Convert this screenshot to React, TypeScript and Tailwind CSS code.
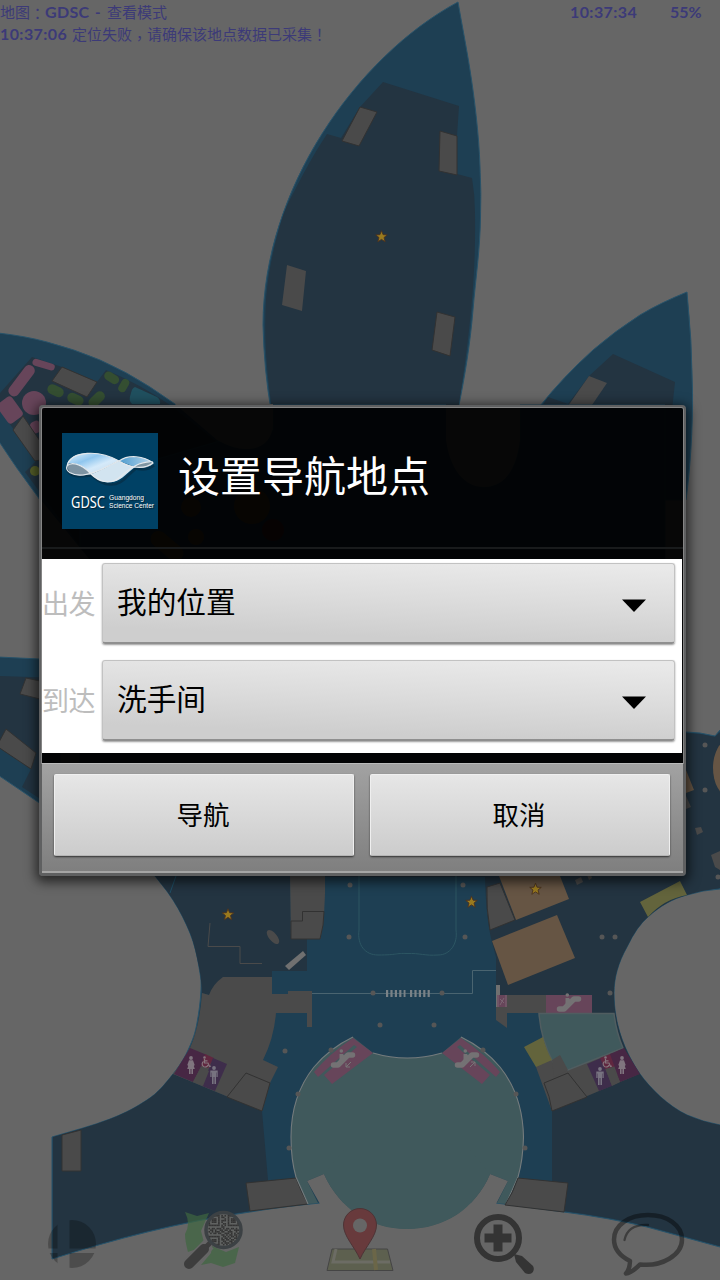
import type { ReactNode } from "react";

const BLUE = "#1e3f53";
const DARK = "#233441";
const GRAY = "#4a4a4a";
const EDGE = "#323232";
const PALE = "#666666";
const TEAL = "#40595c";
const PINK = "#67455a";

const CJK = "font-['Lato','Noto_Sans_CJK_SC',sans-serif]";

function Star({ x, y }: { x: number; y: number }) {
  return (
    <path
      transform={`translate(${x} ${y}) scale(1.15)`}
      d="M0-5 1.4-1.6 5-1.4 2.2.9 3.2 4.6 0 2.5-3.2 4.6-2.2.9-5-1.4-1.4-1.6Z"
      fill="#9a7a1e"
      stroke="#4a3220"
      strokeWidth=".8"
    />
  );
}

function Man({ x, y }: { x: number; y: number }) {
  return (
    <g transform={`translate(${x} ${y})`} fill="#777380">
      <circle cx="0" cy="-7" r="1.9" />
      <path d="M-3.7-4.5H3.7V2H2.4V-2.500H2V9H.4V2H-.4V9H-2V-2.500H-2.400V2H-3.700Z" />
    </g>
  );
}

function Woman({ x, y }: { x: number; y: number }) {
  return (
    <g transform={`translate(${x} ${y})`} fill="#80757f">
      <circle cx="0" cy="-7" r="1.9" />
      <path d="M-2-4.700H2L3.700 0 2.800 1 3.800 4H2V9H.4V4H-.4V9H-2V4H-3.800L-2.800 1-3.700 0Z" />
    </g>
  );
}

function Wheelchair({ x, y }: { x: number; y: number }) {
  return (
    <g transform={`translate(${x} ${y})`} fill="none" stroke="#85757d" strokeWidth="1.200">
      <circle cx="-1.500" cy="-4.500" r=".7" />
      <path d="M-1.500-3V1H2L3.500 4.500 5 4M-1.500-1.200H1.500M-2.500-.5A3 3 0 1 0 2 3" />
    </g>
  );
}

function Escalator({ x, y }: { x: number; y: number }) {
  return (
    <g transform={`translate(${x} ${y})`}>
      <path
        d="M-9.500 6H-5L5-4H9.500"
        fill="none"
        stroke="#747274"
        strokeWidth="5.500"
        strokeLinecap="round"
        strokeLinejoin="round"
      />
      <path d="M-3.500 3V-5H0L2-2V2Z" fill="#747274" />
      <circle cx="-1.700" cy="-8" r="1.800" fill="#747274" />
    </g>
  );
}

const dots: [number, number][] = [
  [350, 885], [349, 937], [463, 885], [465, 937], [373, 993], [442, 993], [380, 1025], [434, 1025],
  [285, 1051], [331, 1050], [483, 1050], [298, 1094], [516, 1094], [289, 1148], [525, 1148],
  [602, 937], [615, 937], [610, 993], [705, 745], [705, 790], [718, 877],
];

function VenueMap() {
  return (
    <svg className="absolute inset-0" width="720" height="1280" viewBox="0 0 720 1280">
      <rect width="720" height="1280" fill={PALE} />

      {/* north petal */}
      <path
        d="M458 2C356 57 263 190 263 325Q264 370 271 410L290 480H440L459 405C465 375 470 345 473 310S480 250 480.500 217S481 200 480 167S474 95 470 70S462 25 458 2Z"
        fill={BLUE} stroke="#28536a" strokeWidth="1"
      />
      <path
        d="M383 82 459 106 457 136V174L472 178Q475 195 475 213C476 270 471 330 458 410H272C266 365 264 335 266 300C268 275 272 255 278 233S287 205 295 190S310 160 327 134L341 138 360 107Z"
        fill={DARK}
      />
      <g fill={GRAY} stroke={EDGE} strokeWidth="1">
        <path d="M360 107 377 112 359 146 342 141Z" />
        <path d="M440 131 457 136V175L439 171Z" />
        <path d="M437 312 455 317 450 356 432 350Z" />
      </g>
      <path d="M287 265 306 271 302 311 282 305Z" fill={GRAY} />
      <Star x={381.500} y={236.500} />

      {/* north-east petal */}
      <path d="M687 292C670 299 655 306 640 315Q615 331 593 350Q563 377 540 406L520 440V500H686C690 470 693 430 692.500 390Q692 340 687 292Z" fill={BLUE} stroke="#28536a" strokeWidth="1" />
      <path d="M613 354 675 382 672 410H540L548 397 568 404 589 376Z" fill={DARK} />
      <path d="M589 376 607 383 592 405 568 406Z" fill={GRAY} />

      {/* north-west petal */}
      <path d="M-2 333Q25 336 47 342Q74 349 100 360Q127 372 150 387L175 404 220 440V560H80Q55 525 38 497Q16 468-2 440Z" fill={BLUE} stroke="#28536a" strokeWidth="1" />
      <path d="M32 357 62 367 97 382 106 370Q140 384 170 405L240 460V560H90L25 472 36 461 0 410V393Z" fill={DARK} />
      <g fill={PINK}>
        <rect x="32" y="361" width="23" height="7" rx="3.500" transform="rotate(17 43 365)" />
        <rect x="4" y="375" width="36" height="11" rx="5" transform="rotate(-53 22 381)" />
        <circle cx="34" cy="403" r="12" />
        <rect x="-2" y="401" width="24" height="18" rx="4" transform="rotate(54 10 410)" />
        <rect x="31" y="421" width="10" height="12" rx="4" transform="rotate(-25 36 427)" />
      </g>
      <g fill="#344e31">
        <rect x="47" y="386" width="17" height="10" rx="5" transform="rotate(25 56 391)" />
        <rect x="67" y="394" width="17" height="10" rx="5" transform="rotate(25 75 399)" />
        <rect x="103.500" y="373" width="16" height="9" rx="4.500" transform="rotate(32 111 378)" />
        <rect x="117" y="382" width="14" height="8" rx="4" transform="rotate(-60 123.500 386)" />
        <rect x="87" y="394" width="19" height="10" rx="5" transform="rotate(-45 97 399)" />
      </g>
      <path d="M135 387 157 397Q161 400 160 404H132Q128 401 131 393Q132 388 135 387Z" fill="#20505f" />
      <circle cx="35" cy="471" r="5" fill="#566029" />
      <path d="M62 367 97 382 87 397 52 381ZM23 416 40 441V460L35 461 13 430Z" fill={GRAY} stroke={EDGE} />

      {/* west petal */}
      <path d="M-2 657 60 660V815L38 802-2 775Z" fill={BLUE} stroke="#28536a" strokeWidth="1" />
      <path d="M0 676 60 678V812L22 787 31 769 0 748Z" fill={DARK} />
      <path d="M26 678 40 681V699L20 694ZM6 729 36 753 31 769-2 747V744Z" fill={GRAY} stroke={EDGE} />

      {/* central hall */}
      <path
        d="M80 500 120 470 220 441Q255 460 273 430V405H446Q447 480 483 487Q515 486 520 440V405H665V732L686 732 700 733 715 736 720 730V889Q703 890 687 895C672 899 660 906 648 917Q637 926 627 947C618 963 614 978 614 993C614 1025 625 1052 640 1074C650 1088 668 1106 687 1115Q703 1122 720 1125V1247L647 1227Q610 1218 564 1212L496 1203H320Q280 1207 250 1212C180 1222 115 1239 52 1259V1137C72 1131 92 1126 110 1119S136 1107 147 1100S165 1084 173 1074S185 1057 189 1048S195 1034 197 1023S200.500 1001 201 990S200.500 977 199 967S194.500 944 190 933S180 911 173 900S158 880 150 870L80 800Z"
        fill={BLUE} stroke="#28536a" strokeWidth="1"
      />
      <path
        d="M80 550H665V732L700 734 715 737 720 732V888Q703 890 687 895C672 899 660 906 648 917Q637 926 627 947C618 963 614 978 614 993C614 1025 625 1052 640 1074C650 1088 668 1106 687 1115Q703 1122 720 1125V1246L647 1226Q610 1217 564 1211L552 1180V1111L620 1040 614 1013H496V957L492 942Q486 920 485 877H290L291 939H307V971H272V977H223L209 995 202 993C201.500 985 201 976 199 967S194.500 944 190 933S180 911 173 900S158 880 150 870L80 800Z"
        fill={DARK}
      />
      <path d="M173 1074 262 1111 268 1180 250 1211C180 1221 115 1238 53 1258V1137C72 1131 92 1126 110 1119S136 1107 147 1100S165 1084 173 1074Z" fill={DARK} />
      <path d="M176 876 170 893" stroke="#1f5068" fill="none" />

      {/* exhibits dimmed behind the dialog title */}
      <g fill="#6b4a20">
        <circle cx="191" cy="507" r="10" /><circle cx="252" cy="506" r="18" />
        <rect x="148" y="538" width="38" height="16" rx="8" transform="rotate(40 167 546)" />
        <circle cx="196" cy="537" r="8" />
      </g>
      <circle cx="273" cy="530" r="11" fill="#5b2028" />
      <path d="M41 500 90 560H41ZM175 404H273V425C272 440 262 449 248 449Q235 450 217 440ZM446 405H520V440C516 470 505 486 485 487S450 470 446 440Z" fill={PALE} />

      {/* west wing rooms */}
      <path
        d="M202 993 209 995Q213 984 223 977H272V994H288V991H312V1027H307V1013H276Q274 1038 263 1060L278 1067 270 1083 262 1111 173 1074Q184 1060 190 1048Q200 1025 202 993Z"
        fill={GRAY}
      />
      <path d="M290 876H325Q326 912 320 939H291Z" fill={GRAY} />
      <path d="M291 921H302.500V911.500H324Q324 925 320 939H291Z" fill={GRAY} stroke={EDGE} />
      <path d="M246 1073 270 1083 262 1111 227 1097ZM62 1135 81 1130V1171H62ZM246 1183 296 1178Q301 1192 308 1204L250 1211Z" fill={GRAY} stroke={EDGE} />
      <path d="M210 923 208 946.500H240V963.500H262" fill="none" stroke="#4a4a4a" />
      <ellipse cx="273" cy="937" rx="8.500" ry="4" transform="rotate(50 273 937)" fill={GRAY} />
      <path d="M285 966 303 951 306 955 289 970Z" fill="#707070" />
      <path d="M190 1048 207 1055 193 1082 174 1074Z" fill="#472744" />
      <path d="M205 1054 214 1058 208 1068 201 1066Z" fill="#60273f" />
      <path d="M213 1058 227 1064 215 1091 202 1086Z" fill="#3e2d4b" />
      <path d="M201 1067 209 1071 203 1086 193 1082Z" fill={GRAY} />
      <Woman x={191} y={1065} />
      <Man x={214} y={1075} />
      <Wheelchair x={206} y={1062} />

      {/* lobby */}
      <path d="M359 876V930C357 945 365 955 378 955C398 955 395 953 407 953.500C420 953 425 956 438 955C450 955 458 944 456 930V876" fill="none" stroke="#2d5663" />
      <path d="M312 993.500H472.500V970.500H496" fill="none" stroke="#4a6470" />
      <path d="M386 993.500H405.500M410 993.500H430" stroke="#7a8287" strokeWidth="7" strokeDasharray="2.200 2.200" />

      {/* rotunda */}
      <path
        d="M353 1037Q330 1048 314 1067C298 1087 291 1110 291 1137Q291 1160 296 1177L308 1204 318 1203 307 1181 324 1174C340 1209 370 1229 407 1229C444 1229 475 1209 490 1174L508 1181 497 1203 506 1204 518 1177Q523 1160 523.500 1137C523 1110 516 1087 500 1067Q484 1048 461 1037L442 1053Q407 1063 373 1053Z"
        fill={TEAL}
      />
      <path d="M308 1204 296 1177Q291 1160 291 1137C291 1110 298 1087 314 1067Q330 1048 353 1037M373 1053Q407 1063 442 1053M461 1037Q484 1048 500 1067C516 1087 523 1110 523.500 1137Q523 1160 518 1177L506 1204" fill="none" stroke="#747b7d" strokeWidth="1.100" />
      <path d="M307 1181 324 1174C340 1209 370 1229 407 1229C444 1229 475 1209 490 1174L508 1181 496 1204V1240H320V1204Z" fill={PALE} />
      <path d="M324 1174C340 1209 370 1229 407 1229C444 1229 475 1209 490 1174L470 1150H344Z" fill={TEAL} />
      <g fill={PINK}>
        <path d="M353 1038 373 1053 332 1084 324 1075 357 1047 354 1045 318 1077 314 1072Q329 1054 353 1038Z" />
        <path d="M461 1038 442 1053 482 1084 490 1075 457 1047 460 1045 496 1077 500 1072Q485 1054 461 1038Z" />
      </g>
      <Escalator x={343} y={1059} />
      <Escalator x={467} y={1059} />
      <path d="M351 1062 346 1067M346 1063V1067H350M470 1067 475 1062M471 1062H475V1066" fill="none" stroke="#777" />

      {/* east wing rooms */}
      <path d="M499 876H560L569 899 516 920Z" fill="#665544" />
      <path d="M492 941 557 915 575 958 508 985Z" fill="#665544" />
      <path d="M487 887 500 883 515 920 490 930Q486 908 487 887Z" fill={GRAY} stroke={EDGE} />
      <path d="M575 880 581 877 583 882 577 885ZM587 875H591L592 878 589 880ZM695 828 701 827 703 832 697 835Z" fill={GRAY} />
      <path d="M686 770 694 790 686 793Z" fill="#665544" />
      <path d="M686 796 691 807 686 809ZM711 855 720 851V870L715 867Z" fill={GRAY} />
      <ellipse cx="729" cy="768" rx="16" ry="28" fill="#665544" />
      <path d="M640 902 680 881 687 895Q664 899 648 917Z" fill="#63643c" />
      <path d="M496 995H546V1013H507V1028L496 1020Z" fill={GRAY} />
      <path d="M496 985H500V1007H496Z" fill="#707070" />
      <rect x="546" y="995" width="46" height="18" fill={PINK} />
      <rect x="497" y="995" width="10" height="12" fill={PINK} />
      <path d="M498 995V1007M506 995V1007M500 999 504 1003M504 998 500 1005" stroke="#7c6673" />
      <Escalator x={569} y={1003} />
      <path d="M540 1056 560 1055 568 1070 614 1048 639 1074 552 1111 536 1067Z" fill={GRAY} />
      <path d="M539 1013.500H614Q616 1032 623 1048L568 1070 553 1062Q541 1040 539 1013.500Z" fill={TEAL} stroke="#505d60" strokeWidth="1.500" />
      <path d="M552 1060 560 1055 568 1070 554 1077Z" fill={GRAY} />
      <path d="M524 1047 543 1037Q546 1050 552 1060L536 1067Z" fill="#63643c" />
      <path d="M544 1083 568 1073 587 1097 552 1111Q550 1096 544 1083ZM518 1178 568 1183 564 1212 505 1205Q513 1193 518 1178Z" fill={GRAY} stroke={EDGE} />
      <path d="M587 1064 601 1058 612 1086 599 1091Z" fill="#3e2d4b" />
      <path d="M600 1058 613 1053 616 1066 605 1069Z" fill="#60273f" />
      <path d="M610 1054 624 1048 640 1074 620 1082Z" fill="#472744" />
      <path d="M606 1070 613 1067 620 1082 612 1086Z" fill={GRAY} />
      <Man x={600} y={1076} />
      <Woman x={622} y={1065} />
      <Wheelchair x={607} y={1062} />

      {dots.map(([x, y]) => (
        <circle key={`${x}-${y}`} cx={x} cy={y} r="2.500" fill="#565656" />
      ))}
      <Star x={228} y={914.500} />
      <Star x={471.500} y={902} />
      <Star x={535.500} y={889} />
    </svg>
  );
}

function StatusHeader() {
  return (
    <header className={`relative text-[15px] leading-[22px] text-[#3c3a78] ${CJK}`}>
      <div className="flex h-[22px] whitespace-nowrap pt-[1px]">
        <span className="w-[30px]">地图</span>
        <span className="w-[15px] pt-[2px] leading-[20px] font-['Noto_Sans_CJK_TC']">：</span>
        <b className="w-[50px] text-[16px] tracking-[0.3px]">GDSC</b>
        <b className="w-[12px]">-</b>
        <span className="w-[463px]">查看模式</span>
        <b className="w-[100px] text-[16px] tracking-[0.4px]">10:37:34</b>
        <b className="text-[16px]">55%</b>
      </div>
      <div className="flex h-[22px] whitespace-nowrap pt-[1px]">
        <b className="w-[72px] text-[16px] tracking-[0.4px]">10:37:06</b>
        <span className="w-[60px]">定位失败</span>
        <span className="w-[15px] pt-[4px] font-['Noto_Sans_CJK_TC']">，</span>
        <span className="w-[165px]">请确保该地点数据已采集</span>
        <span className="w-[15px] font-['Noto_Sans_CJK_TC']">！</span>
      </div>
    </header>
  );
}

function Logo() {
  return (
    <svg width="96" height="96" viewBox="0 0 96 96" className="shrink-0">
      <defs>
        <linearGradient id="wing" x1="0" y1="0" x2="1" y2="1">
          <stop offset="0" stopColor="#e4f2fb" />
          <stop offset=".35" stopColor="#8fc6ee" />
          <stop offset=".6" stopColor="#d5eafa" />
          <stop offset="1" stopColor="#c4d6e4" />
        </linearGradient>
        <linearGradient id="tip" x1="0" y1="0" x2="1" y2="0">
          <stop offset="0" stopColor="#4e9ccf" />
          <stop offset="1" stopColor="#b9d7ec" />
        </linearGradient>
      </defs>
      <rect width="96" height="96" fill="#004165" />
      <g fill="none" stroke="#062a40" strokeWidth="2.500" opacity=".6" transform="translate(1 1.500)">
        <path d="M4 34C5 44 20 42 29 41C40 52 55 54 65 41L73 34Q83 37 91 31" />
      </g>
      <path d="M5 33C9 28 20 32 29 41C22 43 7 45 5 33Z" fill="#7d93a2" />
      <path d="M5 31C10 17 37 17 57 28C47 32 39 38 29 41C20 31 10 29 5 31Z" fill="url(#wing)" />
      <path d="M29 41C39 38 47 32 57 28Q66 32 73 34C62 42 59 49 48 49C40 50 34 46 29 41Z" fill="#d2e4f0" />
      <path d="M57 28C66 22 81 23 91 29C84 29 77 31 73 34Z" fill="url(#tip)" />
      <path d="M73 34Q83 26 91 31Q83 37 73 34Z" fill="#7f95a2" />
      <g fill="none" stroke="#e3e8ec" strokeWidth="1.200">
        <path d="M5 33C9 17 38 17 57 28C68 35 82 37 91 30C82 23 67 21 57 28C46 32 38 40 21 42C10 43 3 38 5 33C9 28 20 31 29 41C36 48 48 53 58 44C68 35 78 28 91 29" />
      </g>
      <g fill="#fff" className="[text-shadow:1px_1px_1px_#021c2c]">
        <text x="9" y="75" fontSize="16" textLength="34" lengthAdjust="spacingAndGlyphs" className="font-['Noto_Sans',sans-serif]">GDSC</text>
        <g className="font-['Liberation_Sans',sans-serif]">
          <text x="47" y="67" fontSize="7" textLength="35" lengthAdjust="spacingAndGlyphs">Guangdong</text>
          <text x="47" y="75" fontSize="7" textLength="45" lengthAdjust="spacingAndGlyphs">Science Center</text>
        </g>
      </g>
    </svg>
  );
}

function SpinnerRow({ label, value }: { label: string; value: string }) {
  return (
    <div className="flex h-[97px] pt-1">
      <span className="mt-[1px] w-[60px] text-[27px] leading-[80px] tracking-[-0.5px] text-[#bdbdbd]">{label}</span>
      <button
        type="button"
        className="flex h-[81px] w-[573px] items-center justify-between rounded-[3px] border border-[#c2c2c2] border-b-[2px] border-b-[#8f8f8f] bg-linear-[182deg] from-[#e9e9e9] from-5% via-[#dcdcdc] via-45% to-[#cecece] to-85% pl-[14px] pr-[28px] shadow-[0_1px_2px_#0006]"
      >
        <span className="mt-[-2px] text-[29.700px] leading-[30px] text-black">{value}</span>
        <svg width="24" height="13" viewBox="0 0 24 13" className="mt-[4px]">
          <path d="M0 .5H24L12 13Z" />
        </svg>
      </button>
    </div>
  );
}

function DialogButton({ children }: { children: ReactNode }) {
  return (
    <button
      type="button"
      className="h-[82px] w-[300px] rounded-[2px] border border-[#efefef] border-b-[#b5b5b5] bg-linear-to-b from-[#e6e6e6] to-[#cccccc] pr-[2px] text-[26.500px] leading-[27px] text-black shadow-[0_1px_2px_0px_#000000a0]"
    >
      {children}
    </button>
  );
}

function NavigationDialog() {
  return (
    <section
      role="dialog"
      className={`absolute left-[39px] top-[405px] w-[647px] rounded-[4px] border-[3px] border-[#5f6061] shadow-[0_3px_12px_3px_#000000a0] ${CJK}`}
    >
      <div className="rounded-t-[2px] bg-[#000000ed] ring-1 ring-[#858585]">
        <div className="flex h-[141px] items-center border-b-2 border-[#191b1c] pl-5 pt-[7px]">
          <Logo />
          <h1 className="mb-[10px] ml-5 text-[42px] leading-[50px] text-white">设置导航地点</h1>
        </div>
        <div className="pb-[10px] pt-[10px]">
          <div className="h-[194px] w-[640px] bg-white">
            <SpinnerRow label="出发" value="我的位置" />
            <SpinnerRow label="到达" value="洗手间" />
          </div>
        </div>
      </div>
      <footer className="relative flex h-[110px] gap-[16px] border-b-2 border-t border-b-[#a5a5a5] border-t-[#bababa] bg-linear-to-b from-[#a2a2a2] to-[#7f7f7f] pl-[12px] pt-[10px]">
        <DialogButton>导航</DialogButton>
        <DialogButton>取消</DialogButton>
      </footer>
    </section>
  );
}

const qr = [
  "1111111010101111111", "1000001011001000001", "1011101000101011101", "1011101011101011101",
  "1011101010001011101", "1000001001101000001", "1111111010101111111", "0000000011000000000",
  "1011011101011011010", "0110100110110100111", "1010111011001110010", "0101101100111010101",
  "0000000011010110110", "1111111001101011010", "1000001010110100110", "1011101011011011001",
  "1011101001100110110", "1000001010111011010", "1111111001010110101",
];

function BottomTools() {
  return (
    <nav className="absolute inset-x-0 bottom-0 flex">
      <svg width="144" height="80" viewBox="0 1200 144 80">
        <clipPath id="disc"><circle cx="72" cy="1244" r="24" /></clipPath>
        <path clipPath="url(#disc)" d="M48 1220H57.500V1248.500H48ZM69.500 1220H96V1248.500H69.500ZM48 1253H57.500V1268H48ZM69.500 1253H96V1268H69.500Z" opacity=".25" />
      </svg>
      <svg width="144" height="80" viewBox="144 1200 144 80">
        <path d="M185 1212 197 1216 209 1213 201 1231 205 1246 188 1252Q185 1241 185 1234 191 1224 185 1212ZM201 1265 211 1253 212 1246 226 1252 239 1247 235 1263 223 1267 211 1263Z" fill="#3f6640" opacity=".7" />
        <path d="M209 1244 188 1265" stroke="#666" strokeWidth="13" />
        <path d="M210 1243 204 1249" stroke="#3d3d3d" strokeWidth="5" />
        <path d="M204 1249 189 1264" stroke="#3d3d3d" strokeWidth="10" strokeLinecap="round" />
        <circle cx="223.500" cy="1230" r="17.500" fill="#606261" stroke="#3c4144" strokeWidth="3.500" />
        <clipPath id="lens"><circle cx="223.500" cy="1230" r="16" /></clipPath>
        <g clipPath="url(#lens)" fill="#333">
          {qr.flatMap((row, r) =>
            row.split("").map((cell, c) =>
              cell === "1" ? (
                <rect key={`${r}-${c}`} x={208.500 + c * 1.600} y={1215 + r * 1.600} width="1.600" height="1.600" />
              ) : null,
            ),
          )}
        </g>
      </svg>
      <svg width="144" height="80" viewBox="288 1200 144 80">
        <path d="M332 1249H387.500L393 1270.500H327Z" fill="#5d604f" stroke="#454545" />
        <path d="M336 1249 333 1262H390" fill="none" stroke="#6c6c64" strokeWidth="3" />
        <path d="M374 1249 376 1270" stroke="#6b6648" strokeWidth="4" />
        <path d="M360 1259C354 1246 343.500 1236 343.500 1225A16.500 16.500 0 0 1 376.500 1225C376.500 1236 366 1246 360 1259Z" fill="#683a3c" stroke="#4d3436" />
        <circle cx="360" cy="1225.500" r="7" fill="#666" />
      </svg>
      <svg width="144" height="80" viewBox="432 1200 144 80">
        <circle cx="498" cy="1238" r="21" fill="none" stroke="#343434" strokeWidth="6" />
        <path d="M493.500 1224.500H502.500V1233.500H511.500V1242.500H502.500V1251.500H493.500V1242.500H484.500V1233.500H493.500Z" fill="#343434" />
        <path d="M514 1254 522 1256 533 1266Q535 1270 532 1273Q529 1275 525 1273L516 1262Z" fill="#343434" />
      </svg>
      <svg width="144" height="80" viewBox="576 1200 144 80">
        <path
          d="M640 1264.500C662 1267 682 1255 682 1239.500C682 1225 667 1215 648 1215C629 1215 614 1225 614 1239.500C614 1249 620 1256 630 1261C630 1267 629 1270 626 1273.500C632 1273 636 1268 640 1264.500Z"
          fill="none" stroke="#000" strokeOpacity=".4" strokeWidth="4.500" strokeLinejoin="round"
        />
        <path d="M624.500 1240Q628 1224 648 1225" fill="none" stroke="#000" strokeOpacity=".4" strokeWidth="2.300" strokeLinecap="round" />
      </svg>
    </nav>
  );
}

export default function App() {
  return (
    <main className="relative h-[1280px] w-[720px] overflow-hidden bg-[#666]">
      <VenueMap />
      <StatusHeader />
      <NavigationDialog />
      <BottomTools />
    </main>
  );
}
